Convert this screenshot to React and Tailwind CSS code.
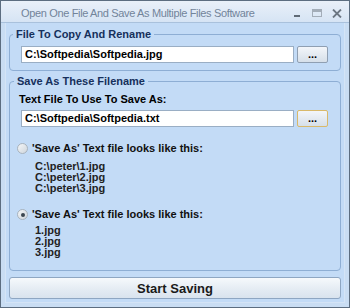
import React from 'react';

const font = { fontFamily: '"Liberation Sans", Arial, sans-serif' };

const Radio = ({ checked }) => (
    <span className="w-[11px] h-[11px] rounded-full border border-[#a9b3bd] bg-gradient-to-br from-[#f4f6f8] to-[#cfd6dd] flex items-center justify-center shrink-0">
        {checked && <span className="w-[4px] h-[4px] rounded-full bg-[#3b4650]" />}
    </span>
);

const DotsButton = ({ hot }) => (
    <button className={`w-[31px] h-[17px] rounded-[2px] border ${hot ? 'border-[#d9b96a]' : 'border-[#8f9fb2]'} bg-gradient-to-b from-[#f3f6fa] to-[#d6dfe9] text-[11px] font-bold leading-none text-black flex items-center justify-center`}>
        ...
    </button>
);

const App = () => {
    return (
        <div className="w-[350px] h-[308px] border border-[#5c6d80] bg-[#c9ddf3] flex flex-col overflow-hidden" style={font}>
            {/* title bar */}
            <div className="h-[22px] shrink-0 bg-gradient-to-b from-[#e9f0f9] to-[#d6e4f4] flex items-center pt-[3px] pl-[20px] pr-[7px] border-b border-[#a9c1dc]">
                <span className="text-[11px] tracking-[-0.35px] whitespace-nowrap text-[#72849a]">Open One File And Save As Multiple Files Software</span>
                <div className="ml-auto flex items-center gap-[10px]">
                    <svg width="9" height="9" viewBox="0 0 9 9"><rect x="1" y="6" width="6" height="2" fill="#5f6a76" /></svg>
                    <svg width="10" height="9" viewBox="0 0 10 9"><rect x="0.5" y="0.5" width="9" height="7" fill="none" stroke="#a3adb8" /><rect x="1" y="1" width="8" height="2" fill="#a3adb8" /></svg>
                    <svg width="10" height="9" viewBox="0 0 10 9"><path d="M1 0.5 L9 8.5 M9 0.5 L1 8.5" stroke="#6b7682" strokeWidth="1.8" /></svg>
                </div>
            </div>

            {/* content */}
            <div className="flex-1 bg-[#c3dbf6] mx-[4px] mb-[4px] border border-t-0 border-[#d4e4f6] px-[3px] pt-[5px] flex flex-col">
                <fieldset className="border border-[#8eaed4] rounded-[4px] pr-[12px] pb-[7px]">
                    <legend className="ml-[3px] px-[3px] text-[11px] leading-[13px] font-bold text-[#16305c]">File To Copy And Rename</legend>
                    <div className="flex gap-[3px] mt-[5px] ml-[11px]">
                        <div className="flex-1 h-[17px] bg-white border border-[#9aaec4] text-[11px] font-bold text-black leading-[15px] pl-[3px]">C:\Softpedia\Softpedia.jpg</div>
                        <DotsButton />
                    </div>
                </fieldset>

                <fieldset className="mt-[4px] border border-[#8eaed4] rounded-[4px] pr-[12px] pb-[12px]">
                    <legend className="ml-[4px] px-[3px] text-[11px] leading-[13px] font-bold text-[#16305c]">Save As These Filename</legend>
                    <div className="mt-[5px] ml-[9px] text-[11px] leading-[13px] font-bold text-black">Text File To Use To Save As:</div>
                    <div className="flex gap-[3px] mt-[4px] ml-[11px]">
                        <div className="flex-1 h-[17px] bg-white border border-[#9aaec4] text-[11px] font-bold text-black leading-[15px] pl-[3px]">C:\Softpedia\Softpedia.txt</div>
                        <DotsButton hot />
                    </div>

                    <div className="mt-[15px] ml-[7px] flex items-center gap-[4px] text-[11px] leading-[13px] font-bold text-[#111]">
                        <Radio />
                        <span>'Save As' Text file looks like this:</span>
                    </div>
                    <div className="mt-[6px] ml-[25px] text-[11px] leading-[11px] font-bold text-[#222]">
                        <div>C:\peter\1.jpg</div>
                        <div>C:\peter\2.jpg</div>
                        <div>C:\peter\3.jpg</div>
                    </div>

                    <div className="mt-[14px] ml-[7px] flex items-center gap-[4px] text-[11px] leading-[13px] font-bold text-[#111]">
                        <Radio checked />
                        <span>'Save As' Text file looks like this:</span>
                    </div>
                    <div className="mt-[4px] ml-[25px] text-[11px] leading-[11px] font-bold text-[#222]">
                        <div>1.jpg</div>
                        <div>2.jpg</div>
                        <div>3.jpg</div>
                    </div>
                </fieldset>

                <button className="mt-[6px] h-[22px] rounded-[3px] border border-[#8ea6c2] bg-gradient-to-b from-[#f6f9fc] via-[#e6edf4] to-[#d9e3ee] text-[13px] font-bold text-[#1a1a1a] leading-none">
                    Start Saving
                </button>
            </div>
        </div>
    );
};

export default App;
